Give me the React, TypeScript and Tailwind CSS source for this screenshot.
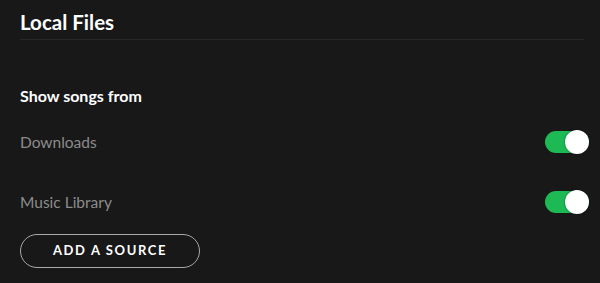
import React from "react";

function Toggle() {
  return (
    <div className="relative h-[22px] w-[44px] rounded-full bg-[#1db954]">
      <div className="absolute right-0 top-1/2 h-[24px] w-[24px] -translate-y-1/2 rounded-full bg-white shadow-[0_0_2px_rgba(0,0,0,0.5)]" />
    </div>
  );
}

export default function App() {
  return (
    <div className="h-[283px] w-[600px] overflow-hidden bg-[#181818] pl-5 pr-[11px] font-['Lato',sans-serif]">
      <div className="mr-[5px] h-[40px] border-b border-[#282828] pt-[10px]">
        <h1 className="text-[20.5px] font-bold leading-[24px] text-white">Local Files</h1>
      </div>
      <div className="mt-[47px] text-[16px] font-bold leading-[18px] text-white">Show songs from</div>
      <div className="mt-[7px] flex h-[60px] items-center justify-between">
        <span className="text-[15.5px] leading-[24px] text-[#8c8c8c]">Downloads</span>
        <Toggle />
      </div>
      <div className="flex h-[60px] items-center justify-between">
        <span className="text-[15.5px] leading-[24px] text-[#8c8c8c]">Music Library</span>
        <Toggle />
      </div>
      <button className="mt-[2px] flex h-[34px] w-[180px] items-center justify-center rounded-full border-[1.5px] border-[#a8a8a8] text-[13px] font-bold tracking-[1.6px] text-white">
        ADD A SOURCE
      </button>
    </div>
  );
}
